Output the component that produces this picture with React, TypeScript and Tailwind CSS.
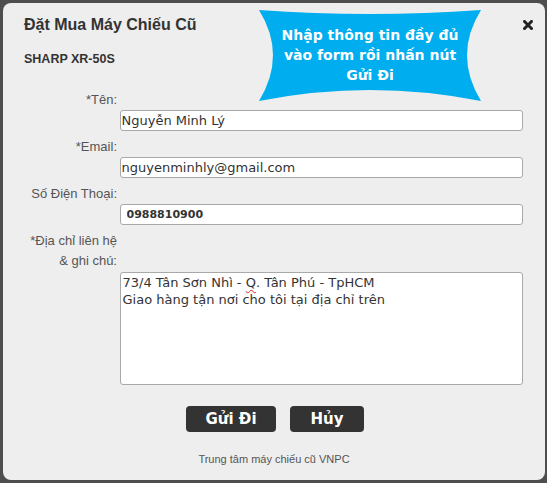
import React from "react";

const sans = { fontFamily: '"Liberation Sans", Arial, sans-serif' };
const verdana = { fontFamily: '"DejaVu Sans", Verdana, sans-serif' };

function Field({ label, children }: { label: React.ReactNode; children: React.ReactNode }) {
  return (
    <div className="flex flex-col">
      <div className="w-[114px] text-right text-[13px] leading-[20px] text-[#555]" style={sans}>
        {label}
      </div>
      <div className="ml-[116.5px]">{children}</div>
    </div>
  );
}

export default function App() {
  return (
    <div className="w-[547px] h-[483px] bg-[#4e4e4e] pt-[3px] pl-[3px] overflow-hidden">
      <div className="relative w-[542px] h-[477px] rounded-[8px] bg-[#eeeeee]">
        {/* header */}
        <div className="px-[21px] pt-[12px]" style={sans}>
          <div className="text-[16px] leading-[19px] font-bold text-[#333]">Đặt Mua Máy Chiếu Cũ</div>
          <div className="mt-[18px] text-[12.5px] leading-[15px] font-bold text-[#333]">SHARP XR-50S</div>
        </div>

        {/* banner */}
        <div className="absolute left-[256px] top-[5px] w-[222px] h-[93px]">
          <svg className="absolute inset-0" width="222" height="93" viewBox="0 0 222 93">
            <path
              d="M0,2 Q111,10 222,2 Q194,47 222,93 Q111,71 0,93 Q28,47 0,2 Z"
              fill="#00adee"
            />
          </svg>
          <div
            className="relative pt-[17px] text-center text-white font-bold text-[14px] leading-[20px]"
            style={verdana}
          >
            <div>Nhập thông tin đầy đủ</div>
            <div>vào form rồi nhấn nút</div>
            <div>Gửi Đi</div>
          </div>
        </div>

        {/* close */}
        <div className="absolute left-[520px] top-[17px] w-[10px] h-[10px]">
          <svg width="10" height="10" viewBox="0 0 10 10">
            <path d="M1.5,1.5 L8.5,8.5 M8.5,1.5 L1.5,8.5" stroke="#222" strokeWidth="3" strokeLinecap="square" />
          </svg>
        </div>

        {/* form */}
        <div className="mt-[23px] flex flex-col gap-[6px]">
          <Field label="*Tên:">
            <input
              readOnly
              defaultValue="Nguyễn Minh Lý"
              className="block w-[403px] h-[21px] border border-[#a9a9a9] rounded-[3px] bg-white pl-[1px] text-[13px] text-[#333] outline-none"
              style={verdana}
            />
          </Field>
          <Field label="*Email:">
            <input
              readOnly
              defaultValue="nguyenminhly@gmail.com"
              className="block w-[403px] h-[21px] border border-[#a9a9a9] rounded-[3px] bg-white pl-[1px] text-[13px] text-[#333] outline-none"
              style={verdana}
            />
          </Field>
          <Field label="Số Điện Thoại:">
            <input
              readOnly
              defaultValue="0988810900"
              className="block w-[403px] h-[21px] border border-[#a9a9a9] rounded-[3px] bg-white pl-[6px] text-[11px] font-bold text-[#333] outline-none"
              style={verdana}
            />
          </Field>
          <Field
            label={
              <>
                <div>*Địa chỉ liên hệ</div>
                <div className="pb-[1px]">&amp; ghi chú:</div>
              </>
            }
          >
            <div
              className="w-[403px] h-[113px] border border-[#a9a9a9] rounded-[3px] bg-white pl-[2px] pt-[1px] text-[13px] leading-[17px] text-[#333]"
              style={verdana}
            >
              <div>
                73/4 Tân Sơn Nhì -{" "}
                <span className="underline decoration-wavy decoration-[#d22] decoration-[1px] underline-offset-[2px]">Q</span>. Tân
                Phú - TpHCM
              </div>
              <div>Giao hàng tận nơi cho tôi tại địa chỉ trên</div>
            </div>
          </Field>
        </div>

        {/* buttons */}
        <div className="mt-[21px] flex justify-center gap-[14px] pl-[2px]">
          <button
            className="w-[90px] h-[26px] rounded-[4px] bg-[#333] text-white font-bold text-[15px] leading-[26px]"
            style={verdana}
          >
            Gửi Đi
          </button>
          <button
            className="w-[74px] h-[26px] rounded-[4px] bg-[#333] text-white font-bold text-[15px] leading-[26px]"
            style={verdana}
          >
            Hủy
          </button>
        </div>

        <div className="mt-[21px] text-center text-[11px] leading-[13px] text-[#555]" style={sans}>
          Trung tâm máy chiếu cũ VNPC
        </div>
      </div>
    </div>
  );
}
